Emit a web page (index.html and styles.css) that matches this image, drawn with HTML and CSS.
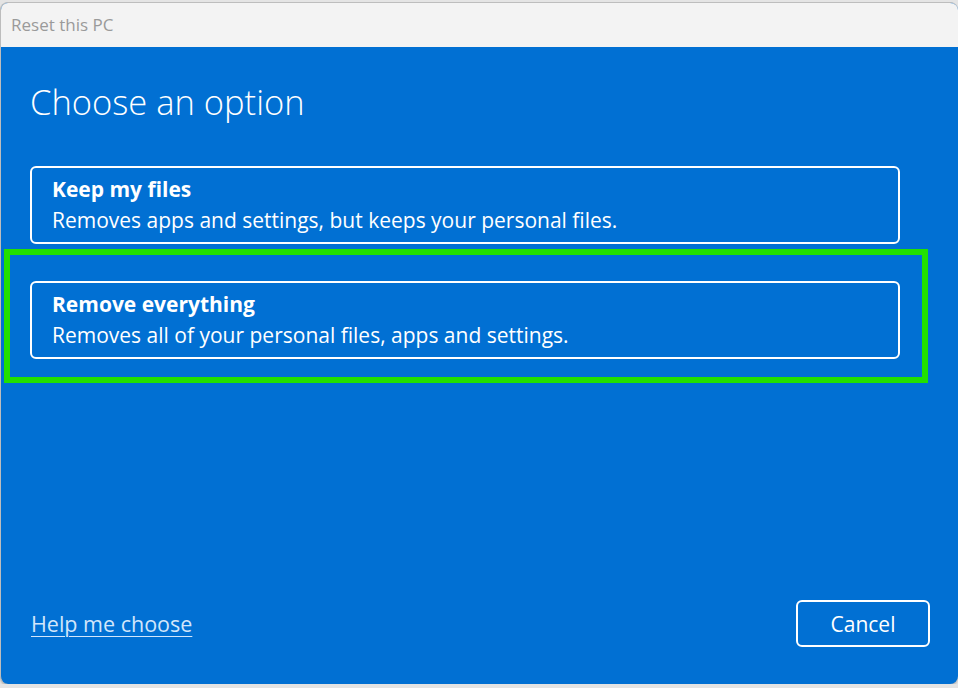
FILE: index.html
```html
<!DOCTYPE html>
<html lang="en">

<head>
  <meta charset="UTF-8">
  <meta name="viewport" content="width=device-width, initial-scale=1.0">
  <title>Reset this PC</title>
  <link rel="stylesheet" href="styles.css">
</head>

<body>

  <div class="window">
    <!-- title bar -->
    <div class="titlebar">Reset this PC</div>

    <div class="content">
      <h1>Choose an option</h1>

      <div class="options">
        <div class="option">
          <div class="option-title">Keep my files</div>
          <div class="option-desc">Removes apps and settings, but keeps your personal files.</div>
        </div>

        <div class="option">
          <div class="option-title">Remove everything</div>
          <div class="option-desc">Removes all of your personal files, apps and settings.</div>
        </div>
      </div>

      <div class="footer">
        <a href="#" class="help">Help me choose</a>
        <button class="cancel">Cancel</button>
      </div>
    </div>

    <!-- highlight drawn over the second option -->
    <div class="highlight"></div>
  </div>

</body>

</html>
```

FILE: styles.css
```css
body {
  margin: 0;
  background: #e4e4e4;
  font-family: "Open Sans", "Noto Sans", sans-serif;
}

.window {
  position: relative;
  width: 957px;
  height: 681px;
  margin-top: 2px;
  border: 1px solid #bdbdbd;
  border-bottom: none;
  border-right: none;
  border-radius: 8px;
  overflow: hidden;
  display: flex;
  flex-direction: column;
  background: #0170d3;
  box-shadow: 0 2px 2px #b8b8b8;
}

.titlebar {
  height: 44px;
  background: #f3f3f3;
  color: #9a9a9a;
  font-size: 17px;
  line-height: 44px;
  padding-left: 10px;
}

.content {
  flex: 1;
  display: flex;
  flex-direction: column;
  padding: 0 28px 37px 29px;
  color: #fff;
}

h1 {
  font-size: 34.5px;
  font-weight: 300;
  margin: 31px 0 0 0;
  line-height: 48px;
}

.options {
  display: flex;
  flex-direction: column;
  gap: 37px;
  margin-top: 40px;
  width: 870px;
}

.option {
  border: 2px solid #fff;
  border-radius: 6px;
  height: 74px;
  padding: 0 20px;
  display: flex;
  flex-direction: column;
  justify-content: center;
}

.option-title {
  font-size: 21px;
  font-weight: 700;
  line-height: 31px;
}

.option-desc {
  font-size: 21px;
  line-height: 31px;
}

.footer {
  margin-top: auto;
  display: flex;
  justify-content: space-between;
  align-items: center;
}

.help {
  color: #d2e6fb;
  font-size: 21.5px;
  margin-left: 1px;
  text-underline-offset: 4px;
  text-decoration-thickness: 1px;
}

.cancel {
  width: 134px;
  height: 47px;
  background: transparent;
  border: 2px solid #fff;
  border-radius: 6px;
  color: #fff;
  font-family: inherit;
  font-size: 21px;
  cursor: pointer;
}

.highlight {
  position: absolute;
  left: 3px;
  top: 246px;
  width: 912px;
  height: 122px;
  border: 6px solid #22e000;
}
```
